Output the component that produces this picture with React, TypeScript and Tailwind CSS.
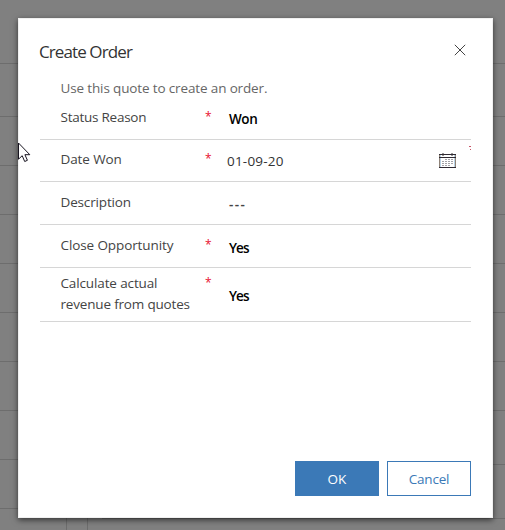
import type { ReactNode } from "react";

function Cursor() {
  return (
    <svg className="absolute left-[18px] top-[142px]" width="13" height="21" viewBox="0 0 13 21">
      <path d="M.5 1v16.2l3.7-3.5 2.5 5.8 2.7-1.2-2.5-5.6h4.9z" fill="#fff" stroke="#17131f" strokeWidth="1" />
    </svg>
  );
}

function CalendarIcon() {
  return (
    <svg width="17" height="15" viewBox="0 0 17 15" shapeRendering="crispEdges">
      <path d="M.5 1v13M16.5 1v13" stroke="#8f8378" />
      <path d="M1.5 1v13M15.5 1v13" stroke="#b9d3e6" />
      <path d="M3 .5h2M12 .5h2M3 2.5h2M12 2.5h2" stroke="#999" />
      <path d="M0 1.5h17M0 4.5h17M0 14.5h17" stroke="#2f2a33" />
      <path d="M6 6.5h9M3 8.5h12M3 10.5h12M3 12.5h9" stroke="#a3a3a8" strokeDasharray="2 1" />
    </svg>
  );
}

type RowProps = { label: ReactNode; required?: boolean; row: string; labelPad: string; children: ReactNode };

function Row({ label, required, row, labelPad, children }: RowProps) {
  return (
    <div className={`flex border-b border-[#d6d6d6] pl-[20.5px] ${row}`}>
      <div className={`w-[144.5px] text-[#444] leading-[21px] ${labelPad}`}>{label}</div>
      <div className={`w-[22px] text-[12px] text-[#e8112d] leading-[19px] ${labelPad}`}>{required ? "*" : ""}</div>
      {children}
    </div>
  );
}

const leftRows = ["h-16", "h-[53px]", "h-[49px]", "h-[49px]", "h-[49px]", "h-[49px]", "h-[49px]", "h-[49px]", "h-[49px]", "h-[49px]"];
const rightRows = ["h-16", "h-[53px]", "h-[49px]", "h-[49px]", "h-[49px]", "h-[49px]", "h-[49px]", "h-[49px]", "h-[54px]", "h-[54px]"];

export default function App() {
  return (
    <div className="relative h-[530px] w-[505px] overflow-hidden bg-[#808080] font-['Open_Sans','Noto_Sans',sans-serif] text-[13.5px]">
      <div className="flex h-full">
        <div className="flex w-[102px] flex-col">
          {leftRows.map((h, i) => (
            <div key={i} className={`shrink-0 border-b border-[#6d6d6d] ${h}`} />
          ))}
          <div className="ml-[66px] w-[22px] grow border-x border-[#6d6d6d]" />
        </div>
        <div className="grow">
          {rightRows.map((h, i) => (
            <div key={i} className={`border-b border-[#6d6d6d] ${h}`} />
          ))}
        </div>
      </div>

      <div className="absolute left-[18px] top-[18px] flex h-[500px] w-[475px] flex-col border border-[#f0f0f0] bg-white pl-[21px] pr-[21px] shadow-[0_2px_6px_0_rgba(0,0,0,0.6)]">
        <header className="flex h-[59px] items-start justify-between">
          <h1 className="-ml-px mt-[20px] text-[17px] leading-[26px] tracking-[-0.9px] text-[#333]">Create Order</h1>
          <svg className="mr-[5px] mt-[25px]" width="12" height="12" viewBox="0 0 12 12">
            <path d="M.8.8l10.4 10.4M11.2.8L.8 11.2" stroke="#444" strokeWidth="1" />
          </svg>
        </header>

        <p className="h-5 pl-[20.5px] leading-[21px] text-[#666]">
          <span className="tracking-[-0.14px]">Use this quote to create an order.</span>
        </p>

        <Row label={<span className="tracking-[-0.25px]">Status Reason</span>} required row="h-[42px]" labelPad="pt-[9px]">
          <div className="pl-[2px] pt-[11px] font-semibold leading-[21px] tracking-[-0.4px] text-black">Won</div>
        </Row>
        <Row label={<span className="tracking-[-0.1px]">Date Won</span>} required row="h-[42px]" labelPad="pt-[9px]">
          <div className="grow pt-[11px] leading-[21px] tracking-[0.2px] text-[#333]">01-09-20</div>
          <div className="mr-[13px] pt-[13px]"><CalendarIcon /></div>
          <svg className="mt-[6px]" width="2" height="4" viewBox="0 0 2 4" shapeRendering="crispEdges">
            <path d="M0 .5h2M1 3.5h1" stroke="#c8566a" />
          </svg>
        </Row>
        <Row label={<span className="tracking-[-0.15px]">Description</span>} row="h-[43px]" labelPad="pt-[10px]">
          <div className="pl-[2px] pt-[12px] font-semibold leading-[21px] tracking-[1.4px] text-[#444]">---</div>
        </Row>
        <Row label={<span className="tracking-[-0.1px]">Close Opportunity</span>} required row="h-[43px]" labelPad="pt-[10px]">
          <div className="pl-[2px] pt-[13px] font-semibold leading-[21px] tracking-[-0.9px] text-black">Yes</div>
        </Row>
        <Row
          label={<><span className="block tracking-[-0.13px]">Calculate actual</span><span className="block tracking-[-0.18px]">revenue from quotes</span></>}
          required row="h-[54px]" labelPad="pt-[5px]"
        >
          <div className="pl-[2px] pt-[18px] font-semibold leading-[21px] tracking-[-0.9px] text-black">Yes</div>
        </Row>

        <footer className="mt-auto flex justify-end gap-2 pb-[21px]">
          <button className="h-[35px] w-[84px] bg-[#3b79b7] pt-px text-white">OK</button>
          <button className="h-[35px] w-[84px] border border-[#3b79b7] pt-px tracking-[-0.2px] text-[#3b79b7]">Cancel</button>
        </footer>
      </div>
      <Cursor />
    </div>
  );
}
